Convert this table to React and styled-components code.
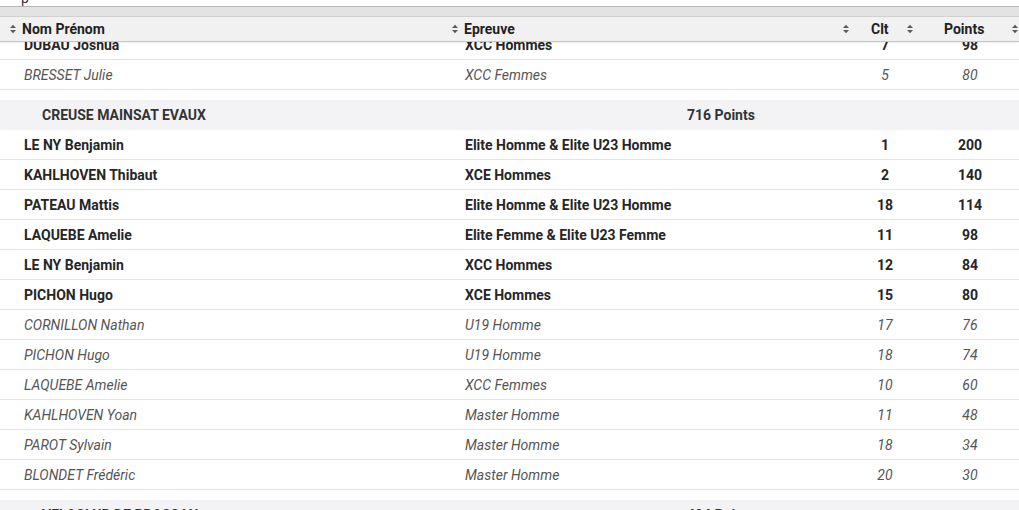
import React from 'react'
import styled, { createGlobalStyle } from 'styled-components'

const groups = [
    {
        name: 'UC CREUSOISE',
        points: '',
        partial: true,
        rows: [
            { name: 'DUBAU Joshua', epreuve: 'XCC Hommes', clt: 7, pts: 98, strong: true },
            { name: 'BRESSET Julie', epreuve: 'XCC Femmes', clt: 5, pts: 80 },
        ],
    },
    {
        name: 'CREUSE MAINSAT EVAUX',
        points: '716 Points',
        rows: [
            { name: 'LE NY Benjamin', epreuve: 'Elite Homme & Elite U23 Homme', clt: 1, pts: 200, strong: true },
            { name: 'KAHLHOVEN Thibaut', epreuve: 'XCE Hommes', clt: 2, pts: 140, strong: true },
            { name: 'PATEAU Mattis', epreuve: 'Elite Homme & Elite U23 Homme', clt: 18, pts: 114, strong: true },
            { name: 'LAQUEBE Amelie', epreuve: 'Elite Femme & Elite U23 Femme', clt: 11, pts: 98, strong: true },
            { name: 'LE NY Benjamin', epreuve: 'XCC Hommes', clt: 12, pts: 84, strong: true },
            { name: 'PICHON Hugo', epreuve: 'XCE Hommes', clt: 15, pts: 80, strong: true },
            { name: 'CORNILLON Nathan', epreuve: 'U19 Homme', clt: 17, pts: 76 },
            { name: 'PICHON Hugo', epreuve: 'U19 Homme', clt: 18, pts: 74 },
            { name: 'LAQUEBE Amelie', epreuve: 'XCC Femmes', clt: 10, pts: 60 },
            { name: 'KAHLHOVEN Yoan', epreuve: 'Master Homme', clt: 11, pts: 48 },
            { name: 'PAROT Sylvain', epreuve: 'Master Homme', clt: 18, pts: 34 },
            { name: 'BLONDET Frédéric', epreuve: 'Master Homme', clt: 20, pts: 30 },
        ],
    },
    {
        name: 'VELOCLUB DE BROSSAN',
        points: '404 Points',
        rows: [],
    },
]

const SortIcon = () => (
    <SortSvg width="6" height="10" viewBox="0 0 6 10">
        <polygon points="0,4 3,0.8 6,4" />
        <polygon points="0,6 3,9.2 6,6" />
    </SortSvg>
)

const App = () => {
    return (
        <>
            <GlobalStyle />
            <Page>
                <TopStrip>
                    <span>p</span>
                </TopStrip>
                <Band />
                <Header>
                    <HeadCell $pad={10}>
                        <SortIcon />
                        <span>Nom Prénom</span>
                    </HeadCell>
                    <HeadCell $pad={12}>
                        <SortIcon />
                        <span>Epreuve</span>
                    </HeadCell>
                    <CltHead>
                        <SortIcon />
                        <span>Clt</span>
                        <SortIcon />
                    </CltHead>
                    <PointsHead>
                        <span>Points</span>
                        <SortIcon />
                    </PointsHead>
                </Header>
                <Body>
                    {groups.map((g, gi) => (
                        <React.Fragment key={gi}>
                            {!g.partial && (
                                <>
                                    <Spacer />
                                    <GroupRow>
                                        <GroupName>{g.name}</GroupName>
                                        <span>{g.points}</span>
                                    </GroupRow>
                                </>
                            )}
                            {g.rows.map((r, ri) => (
                                <Row key={ri} $strong={r.strong}>
                                    <NameCell>{r.name}</NameCell>
                                    <EpreuveCell>{r.epreuve}</EpreuveCell>
                                    <NumCell>{r.clt}</NumCell>
                                    <NumCell>{r.pts}</NumCell>
                                </Row>
                            ))}
                        </React.Fragment>
                    ))}
                </Body>
            </Page>
        </>
    )
}

export default App

const GlobalStyle = createGlobalStyle`
    html, body {
        margin: 0;
        padding: 0;
        background: #fff;
    }
    body {
        font-family: Roboto, "Liberation Sans", sans-serif;
        font-size: 14px;
        color: #262626;
    }
`

const Page = styled.div`
    width: 1019px;
    height: 510px;
    overflow: hidden;
`

const TopStrip = styled.div`
    height: 6px;
    overflow: hidden;
    border-bottom: 1px solid #b4b4b4;
    padding-left: 21px;
    font-size: 14px;

    & > span {
        display: block;
        line-height: 14px;
        margin-top: -9px;
        color: #333;
    }
`

const Band = styled.div`
    height: 9px;
    background: #e3e3e3;
    border-bottom: 1px solid #d2d2d2;
`

const Header = styled.div`
    position: relative;
    z-index: 1;
    display: grid;
    grid-template-columns: 440px 395px 100px 1fr;
    height: 24px;
    background: #f1f1f1;
    border-bottom: 1px solid #c4c4c4;
    box-shadow: 0 1px 2px rgba(0, 0, 0, 0.08);
    font-weight: 700;
    color: #222;
`

const HeadCell = styled.div`
    display: flex;
    align-items: center;
    gap: 6px;
    padding-left: ${p => p.$pad}px;
`

const CltHead = styled.div`
    display: flex;
    align-items: center;
    padding-left: 8px;
    gap: 20px;

    & > span {
        margin-left: 2px;
        margin-right: -2px;
    }
`

const PointsHead = styled.div`
    display: flex;
    align-items: center;
    padding-left: 9px;
    padding-right: 1px;
    justify-content: space-between;
`

const SortSvg = styled.svg`
    flex: none;
    fill: #5a5a5a;
`

const Body = styled.div`
    margin-top: -12px;
`

const Spacer = styled.div`
    height: 10px;
`

const GroupRow = styled.div`
    display: grid;
    grid-template-columns: 687px 1fr;
    align-items: center;
    height: 30px;
    background: #f3f3f5;
    font-weight: 700;
    color: #333;
`

const GroupName = styled.span`
    padding-left: 42px;
`

const Row = styled.div`
    display: grid;
    grid-template-columns: 440px 395px 100px 70px 1fr;
    align-items: center;
    height: 29px;
    border-bottom: 1px solid #e4e4e4;
    font-weight: ${p => (p.$strong ? 700 : 400)};
    font-style: ${p => (p.$strong ? 'normal' : 'italic')};
    color: ${p => (p.$strong ? '#262626' : '#555')};
`

const NameCell = styled.div`
    padding-left: 24px;
`

const EpreuveCell = styled.div`
    padding-left: 25px;
`

const NumCell = styled.div`
    text-align: center;
`
